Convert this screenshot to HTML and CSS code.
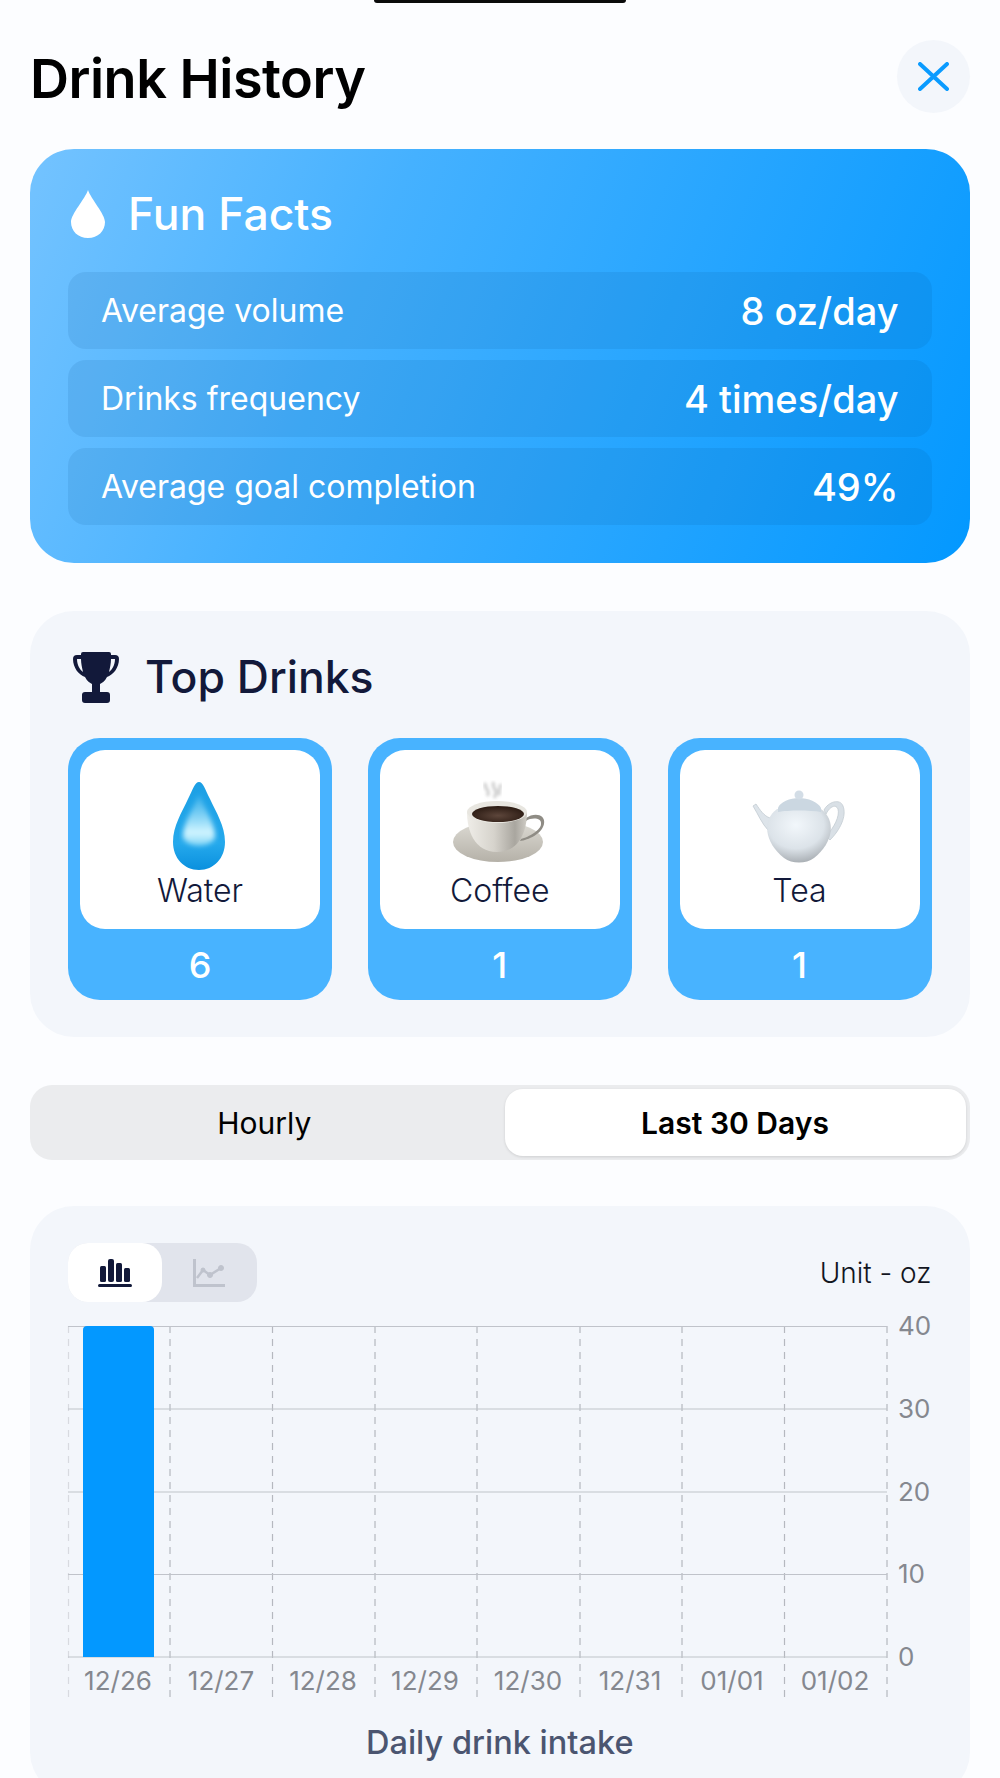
FILE: index.html
```html
<!DOCTYPE html>
<html lang="en">
<head>
    <meta charset="UTF-8">
    <meta name="viewport" content="width=device-width, initial-scale=1.0">
    <title>Drink History</title>
    <link rel="stylesheet" href="styles.css">
</head>
<body>

    <div class="notch"></div>

    <div class="header">
        <h1>Drink History</h1>
        <button class="close">
            <svg width="31" height="29" viewBox="0 0 31 29"><path d="M2 2 L29 27 M29 2 L2 27" stroke="#0a9bff" stroke-width="4" stroke-linecap="round" fill="none"/></svg>
        </button>
    </div>

    <div class="facts">
        <div class="card-title">
            <svg class="facts-icon" width="34" height="48" viewBox="0 0 34 48"><path d="M17 0 C20 9 34 24 34 32 C34 41 27 48 17 48 C7 48 0 41 0 32 C0 24 14 9 17 0 Z" fill="#fff"/></svg>
            <h2>Fun Facts</h2>
        </div>
        <div class="fact-row"><span>Average volume</span><strong>8 oz/day</strong></div>
        <div class="fact-row"><span>Drinks frequency</span><strong>4 times/day</strong></div>
        <div class="fact-row"><span>Average goal completion</span><strong>49%</strong></div>
    </div>

    <div class="panel top-drinks">
        <div class="card-title dark">
            <svg class="trophy" width="46" height="51" viewBox="0 0 46 51">
                <path d="M10 0 H36 Q38 0 38 2 V3 H42 Q46 3 46 7 C46 16 40 23 34 25 C32 29 29 31 27 32 V40 H34 Q37 40 37 43 V48 Q37 51 34 51 H12 Q9 51 9 48 V43 Q9 40 12 40 H19 V32 C17 31 14 29 12 25 C6 23 0 16 0 7 Q0 3 4 3 H8 V2 Q8 0 10 0 Z M8 7 H4 C4 13 7 18 10 20 C9 16 8 11 8 7 Z M38 7 C38 11 37 16 36 20 C39 18 42 13 42 7 Z" fill="#12193a" fill-rule="evenodd"/>
            </svg>
            <h2>Top Drinks</h2>
        </div>
        <div class="tiles">
            <div class="tile">
                <div class="tile-inner">
                    <svg class="emoji" width="100" height="92" viewBox="0 0 100 92">
                        <defs>
                            <linearGradient id="dropFill" x1="0" y1="0" x2="0" y2="1">
                                <stop offset="0" stop-color="#1c9fe4"/>
                                <stop offset="0.7" stop-color="#25a9ec"/>
                                <stop offset="1" stop-color="#0a90de"/>
                            </linearGradient>
                            <linearGradient id="dropShine" x1="0" y1="0" x2="0" y2="1">
                                <stop offset="0" stop-color="#8fdcf8" stop-opacity="0.2"/>
                                <stop offset="0.75" stop-color="#d2f5ff"/>
                                <stop offset="1" stop-color="#7fd4f6"/>
                            </linearGradient>
                            <filter id="dropBlur"><feGaussianBlur stdDeviation="2.500"/></filter>
                        </defs>
                        <path d="M49 2 C53 2 55 9 60 19 C66 32 75 46 75 62 C75 78 64 90 49 90 C34 90 23 78 23 62 C23 46 32 32 38 19 C43 9 45 2 49 2 Z" fill="url(#dropFill)"/>
                        <path d="M49 14 C54 28 66 44 65 58 C60 68 38 68 33 58 C32 44 44 28 49 14 Z" fill="url(#dropShine)" filter="url(#dropBlur)"/>
                    </svg>
                    <span>Water</span>
                </div>
                <div class="tile-count">6</div>
            </div>
            <div class="tile">
                <div class="tile-inner">
                    <svg class="emoji" width="100" height="92" viewBox="0 0 100 92">
                        <defs>
                            <linearGradient id="cupFill" x1="0" y1="0" x2="1" y2="0">
                                <stop offset="0" stop-color="#efede8"/>
                                <stop offset="0.45" stop-color="#d6d3cc"/>
                                <stop offset="0.8" stop-color="#a9a69f"/>
                                <stop offset="1" stop-color="#cfccc5"/>
                            </linearGradient>
                            <linearGradient id="saucerFill" x1="0" y1="0" x2="0" y2="1">
                                <stop offset="0" stop-color="#dcdad3"/>
                                <stop offset="1" stop-color="#b5b1a8"/>
                            </linearGradient>
                            <radialGradient id="coffeeFill" cx="0.5" cy="0.6" r="0.55">
                                <stop offset="0" stop-color="#5d463b"/>
                                <stop offset="1" stop-color="#2e1d15"/>
                            </radialGradient>
                            <filter id="steamBlur"><feGaussianBlur stdDeviation="1.500"/></filter>
                        </defs>
                        <path d="M36 3 C32 8 42 10 37 16 M44 2 C40 8 50 9 44 18 M50 4 C52 9 46 11 50 15" stroke="#d4d4d4" stroke-width="3.500" fill="none" filter="url(#steamBlur)"/>
                        <ellipse cx="48" cy="62" rx="45" ry="20" fill="url(#saucerFill)"/>
                        <path d="M76 38 C84 32 96 34 94 44 C92 54 78 60 70 61 L71 59 C79 57 91 50 91 44 C92 38 82 37 76 41 Z" fill="#8f8c85"/>
                        <path d="M17 32 C17 50 24 72 47 72 C70 72 77 50 77 32 Z" fill="url(#cupFill)"/>
                        <ellipse cx="47" cy="32" rx="30" ry="11" fill="#e8e6e0"/>
                        <ellipse cx="48" cy="34" rx="26" ry="8" fill="url(#coffeeFill)"/>
                    </svg>
                    <span>Coffee</span>
                </div>
                <div class="tile-count">1</div>
            </div>
            <div class="tile">
                <div class="tile-inner">
                    <svg class="emoji" width="100" height="92" viewBox="0 0 100 92">
                        <defs>
                            <radialGradient id="potFill" cx="0.45" cy="0.3" r="0.8">
                                <stop offset="0" stop-color="#f2f7fb"/>
                                <stop offset="0.55" stop-color="#dce3e9"/>
                                <stop offset="1" stop-color="#989da2"/>
                            </radialGradient>
                        </defs>
                        <path d="M3 26 L6 24 C10 30 14 36 20 38 L18 50 C12 44 8 34 3 26 Z" fill="#dde4ea" stroke="#c3cbd2" stroke-width="0.8"/>
                        <path d="M74 30 C78 22 90 18 93 26 C97 36 90 50 80 60 L76 56 C84 48 90 36 88 29 C86 24 80 26 76 34 Z" fill="#d9e0e6" stroke="#c3cbd2" stroke-width="0.8"/>
                        <path d="M27 29 C12 40 14 62 34 78 C42 84 56 84 64 78 C84 62 86 40 71 29 Z" fill="url(#potFill)"/>
                        <path d="M28 28 C30 22 40 18 49 18 C58 18 68 22 71 28 L71 32 C60 30 38 30 28 32 Z" fill="#cbd7e1"/>
                        <circle cx="49" cy="15" r="4.500" fill="#d3dde6"/>
                    </svg>
                    <span>Tea</span>
                </div>
                <div class="tile-count">1</div>
            </div>
        </div>
    </div>

    <div class="segments">
        <div class="segment first">Hourly</div>
        <div class="segment active">Last 30 Days</div>
    </div>

    <div class="panel chart">
        <div class="chart-top">
            <div class="chart-toggle">
                <div class="toggle-btn active">
                    <svg width="34" height="28" viewBox="0 0 34 28" fill="#12193a">
                        <rect x="2" y="7" width="6" height="16" rx="1.5"/>
                        <rect x="10" y="0" width="6" height="23" rx="2"/>
                        <rect x="18" y="4" width="6" height="19" rx="1.5"/>
                        <rect x="26" y="9" width="6" height="14" rx="1.5"/>
                        <rect x="0" y="25" width="34" height="3" rx="1.5"/>
                    </svg>
                </div>
                <div class="toggle-btn">
                    <svg width="32" height="28" viewBox="0 0 32 28" fill="none" stroke="#bfc3cd">
                        <path d="M1.5 0 V26.5 H32" stroke-width="3"/>
                        <path d="M4 19 L10 11 L17 16 L28 9" stroke-width="2.5"/>
                        <circle cx="10" cy="11" r="2" fill="#bfc3cd"/>
                        <circle cx="17" cy="16" r="2.5" fill="#bfc3cd"/>
                        <circle cx="28" cy="9" r="2.5" fill="#bfc3cd"/>
                    </svg>
                </div>
            </div>
            <div class="unit">Unit - oz</div>
        </div>

        <svg class="plot" width="870" height="385" viewBox="0 0 870 385">
            <g class="grid-v">
                <line class="faint" x1="0.5" y1="7" x2="0.5" y2="378"/>
                <line x1="102" y1="7" x2="102" y2="378"/>
                <line x1="204.500" y1="7" x2="204.500" y2="378"/>
                <line x1="307" y1="7" x2="307" y2="378"/>
                <line x1="409" y1="7" x2="409" y2="378"/>
                <line x1="512" y1="7" x2="512" y2="378"/>
                <line x1="614" y1="7" x2="614" y2="378"/>
                <line x1="716.500" y1="7" x2="716.500" y2="378"/>
                <line x1="819" y1="7" x2="819" y2="378"/>
            </g>
            <g class="grid-h">
                <line x1="0" y1="7.500" x2="819" y2="7.500"/>
                <line x1="0" y1="90" x2="819" y2="90"/>
                <line x1="0" y1="173" x2="819" y2="173"/>
                <line x1="0" y1="255.500" x2="819" y2="255.500"/>
                <line x1="0" y1="338" x2="819" y2="338"/>
            </g>
            <path class="bar" d="M15 338 V11 Q15 7 19 7 H82 Q86 7 86 11 V338 Z"/>
            <g class="tick">
                <text x="830" y="16">40</text>
                <text x="830" y="99">30</text>
                <text x="830" y="182">20</text>
                <text x="830" y="264">10</text>
                <text x="830" y="347">0</text>
            </g>
            <g class="tick date">
                <text x="50" y="371">12/26</text>
                <text x="153" y="371">12/27</text>
                <text x="255" y="371">12/28</text>
                <text x="357" y="371">12/29</text>
                <text x="460" y="371">12/30</text>
                <text x="562" y="371">12/31</text>
                <text x="664" y="371">01/01</text>
                <text x="767" y="371">01/02</text>
            </g>
        </svg>

        <div class="chart-caption">Daily drink intake</div>
    </div>

</body>
</html>
```

FILE: styles.css
```css
html, body {
    margin: 0;
    height: 1778px;
    overflow: hidden;
}
body {
    font-family: 'Inter', 'Liberation Sans', sans-serif;
    background: #fcfdff;
    color: #12193a;
    padding: 0 30.500px 0 30px;
    box-sizing: border-box;
    position: relative;
}
.notch {
    position: absolute;
    top: 0;
    left: 374px;
    width: 252px;
    height: 3px;
    background: #0b0b0b;
    border-radius: 0 0 14px 14px;
}
.header {
    display: flex;
    justify-content: space-between;
    align-items: center;
    padding-top: 40px;
    height: 73px;
}
h1 {
    margin: 0 0 -3px;
    font-size: 54px;
    font-weight: 600;
    letter-spacing: -0.5px;
    color: #000;
}
h2 {
    margin: 0;
    font-size: 44.500px;
    font-weight: 500;
}
.close {
    width: 73px;
    height: 73px;
    border: none;
    padding: 0;
    border-radius: 50%;
    background: #f3f6fb;
    display: flex;
    align-items: center;
    justify-content: center;
}
.facts {
    margin-top: 36px;
    height: 414px;
    box-sizing: border-box;
    padding: 30px 38px 0;
    border-radius: 44px;
    background: linear-gradient(112deg, #74c3ff, #45b1ff 35%, #0398ff);
    color: #fff;
}
.card-title {
    display: flex;
    align-items: center;
    gap: 23px;
    height: 70px;
    margin-bottom: 23px;
}
.facts-icon {
    margin-left: 3px;
}
.fact-row {
    display: flex;
    justify-content: space-between;
    align-items: center;
    height: 77px;
    margin-bottom: 11px;
    padding: 0 33px;
    border-radius: 18px;
    background: rgba(0, 70, 130, 0.1);
    font-size: 32px;
    font-weight: 400;
}
.fact-row strong {
    font-size: 38px;
    font-weight: 500;
}
.panel {
    background: #f3f6fb;
    border-radius: 44px;
    padding: 0 38px;
}
.top-drinks {
    margin-top: 48px;
    height: 426px;
    box-sizing: border-box;
    padding-top: 31px;
}
.trophy {
    margin-left: 5px;
}
.card-title.dark {
    gap: 26px;
    margin-bottom: 26px;
}
.tiles {
    display: grid;
    grid-template-columns: repeat(3, 264px);
    justify-content: space-between;
}
.tile {
    height: 262px;
    background: #48b3ff;
    border-radius: 32px;
    padding: 12px 12px 0;
    box-sizing: border-box;
    text-align: center;
    color: #fff;
}
.tile-inner {
    height: 179px;
    background: #fff;
    border-radius: 25px;
    display: flex;
    flex-direction: column;
    align-items: center;
    padding-top: 30px;
    box-sizing: border-box;
    color: #12193a;
    font-size: 32px;
    font-weight: 300;
}
.emoji {
    display: block;
    flex-shrink: 0;
}
.tile-inner span {
    line-height: 38px;
}
.tile-count {
    font-size: 36px;
    line-height: 72px;
    font-weight: 500;
}
.segments {
    margin-top: 48px;
    height: 75px;
    box-sizing: border-box;
    padding: 4px;
    display: grid;
    grid-template-columns: 1fr 461px;
    background: #ebecee;
    border-radius: 22px;
    color: #000;
    font-size: 30px;
    font-weight: 400;
}
.segment {
    display: flex;
    align-items: center;
    justify-content: center;
}
.segment.first {
    padding-right: 10px;
}
.segment.active {
    background: #fff;
    border-radius: 18px;
    font-weight: 600;
    box-shadow: 0 1px 3px rgba(0, 0, 0, 0.12);
}
.chart {
    margin-top: 46px;
    height: 590px;
    padding-top: 37px;
    box-sizing: border-box;
}
.chart-top {
    display: flex;
    justify-content: space-between;
    align-items: center;
    margin-bottom: 17px;
}
.chart-toggle {
    display: flex;
    width: 189px;
    height: 59px;
    background: #e1e4ec;
    border-radius: 20px;
}
.toggle-btn {
    width: 94px;
    display: flex;
    align-items: center;
    justify-content: center;
}
.toggle-btn.active {
    background: #fff;
    border-radius: 20px;
}
.unit {
    font-size: 28px;
    font-weight: 300;
    color: #12151f;
}
.plot {
    display: block;
    overflow: visible;
}
.grid-v line {
    stroke: #b5b8bf;
    stroke-width: 1.200;
    stroke-dasharray: 7 6;
}
.grid-v line.faint {
    stroke: #d8dae0;
}
.grid-h line {
    stroke: #c0c3ca;
    stroke-width: 1.200;
}
.bar {
    fill: #0398ff;
}
.tick text {
    font-size: 26px;
    fill: #85888f;
}
.date text {
    text-anchor: middle;
}
.chart-caption {
    margin-top: 19px;
    text-align: center;
    font-size: 32.500px;
    font-weight: 500;
    color: #4b5570;
}
```
